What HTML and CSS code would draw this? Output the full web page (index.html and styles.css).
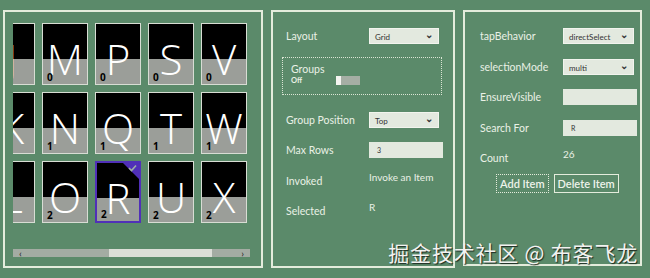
FILE: index.html
```html
<!doctype html>
<html>
    <head>
        <meta charset="utf-8" />
        <title>ListView Grid</title>
        <link rel="stylesheet" href="styles.css">
    </head>
    <body>
        <div class="app">
            <section class="panel grid-panel">
                <div class="viewport">
                    <div class="tiles">
                        <div class="tile"><span class="letter">J</span><span class="num">0</span></div>
                        <div class="tile"><span class="letter">M</span><span class="num">0</span></div>
                        <div class="tile"><span class="letter">P</span><span class="num">0</span></div>
                        <div class="tile"><span class="letter">S</span><span class="num">0</span></div>
                        <div class="tile"><span class="letter">V</span><span class="num">0</span></div>
                        <div class="tile"><span class="letter">K</span><span class="num">1</span></div>
                        <div class="tile"><span class="letter">N</span><span class="num">1</span></div>
                        <div class="tile"><span class="letter">Q</span><span class="num">1</span></div>
                        <div class="tile"><span class="letter">T</span><span class="num">1</span></div>
                        <div class="tile"><span class="letter">W</span><span class="num">1</span></div>
                        <div class="tile"><span class="letter">L</span><span class="num">2</span></div>
                        <div class="tile"><span class="letter">O</span><span class="num">2</span></div>
                        <div class="tile selected">
                            <span class="letter">R</span><span class="num">2</span>
                            <svg class="check" width="16" height="16" viewBox="0 0 16 16">
                                <polygon points="0,0 16,0 16,16" fill="#5030b8" />
                                <polyline points="6,5 8.5,7.5 13,2.5" fill="none" stroke="#9fb0a6" stroke-width="1.6" />
                            </svg>
                        </div>
                        <div class="tile"><span class="letter">U</span><span class="num">2</span></div>
                        <div class="tile"><span class="letter">X</span><span class="num">2</span></div>
                    </div>
                </div>
                <div class="scrollbar">
                    <span class="arrow">‹</span>
                    <div class="track"><div class="thumb"></div></div>
                    <span class="arrow">›</span>
                </div>
            </section>

            <section class="panel settings">
                <div class="row">
                    <label>Layout</label>
                    <div class="select">Grid<span class="chev">⌄</span></div>
                </div>
                <div class="groups">
                    <div class="groups-title">Groups</div>
                    <div class="toggle-row">
                        <span class="off">Off</span>
                        <span class="toggle"><span class="knob"></span></span>
                    </div>
                </div>
                <div class="row">
                    <label>Group Position</label>
                    <div class="select">Top<span class="chev">⌄</span></div>
                </div>
                <div class="row">
                    <label>Max Rows</label>
                    <div class="input">3</div>
                </div>
                <div class="row">
                    <label>Invoked</label>
                    <span class="value">Invoke an Item</span>
                </div>
                <div class="row">
                    <label>Selected</label>
                    <span class="value">R</span>
                </div>
            </section>

            <section class="panel settings right">
                <div class="row">
                    <label>tapBehavior</label>
                    <div class="select">directSelect<span class="chev">⌄</span></div>
                </div>
                <div class="row">
                    <label>selectionMode</label>
                    <div class="select">multi<span class="chev">⌄</span></div>
                </div>
                <div class="row">
                    <label>EnsureVisible</label>
                    <div class="input"></div>
                </div>
                <div class="row">
                    <label>Search For</label>
                    <div class="input">R</div>
                </div>
                <div class="row">
                    <label>Count</label>
                    <span class="value">26</span>
                </div>
                <div class="buttons">
                    <button class="focused">Add Item</button>
                    <button>Delete Item</button>
                </div>
            </section>

            <div class="watermark">掘金技术社区 @ 布客飞龙</div>
        </div>
    </body>
</html>
```

FILE: styles.css
```css
body {
    margin: 0;
    background: #5b8a6a;
    font-family: Lato, "Open Sans", sans-serif;
    color: #eaf1e6;
}
.app {
    position: relative;
    display: flex;
    gap: 8px;
    padding: 10px 0 0 3px;
    width: 650px;
    height: 278px;
    box-sizing: border-box;
}
.panel {
    border: 2px solid #e4ecdc;
    height: 258px;
    box-sizing: border-box;
}
.grid-panel {
    width: 260px;
    padding: 11px 0 0 8px;
}
.viewport {
    width: 237px;
    height: 222px;
    overflow: hidden;
}
.tiles {
    display: grid;
    grid-template-columns: repeat(5, 46px);
    grid-auto-rows: 62px;
    gap: 7px;
    margin-left: -24px;
}
.tile {
    position: relative;
    background: linear-gradient(#000 0, #000 35px, #9b9e99 35px);
    border: 1px solid #d8ddd4;
    box-sizing: border-box;
    overflow: hidden;
}
.letter {
    display: block;
    text-align: center;
    font-family: "Open Sans", sans-serif;
    font-weight: 300;
    font-size: 42px;
    line-height: 54px;
    margin-top: 8px;
    color: #fff;
}
.num {
    position: absolute;
    left: 4px;
    bottom: 2px;
    font-family: "Open Sans", sans-serif;
    font-weight: 700;
    font-size: 10px;
    line-height: 10px;
    color: #000;
}
.tile.selected {
    border: 2px solid #5030b8;
}
.check {
    position: absolute;
    top: 0;
    right: 0;
}
.scrollbar {
    display: flex;
    align-items: center;
    width: 237px;
    height: 8px;
    margin-top: 4px;
    background: #a3aca3;
}
.arrow {
    font-size: 10px;
    line-height: 8px;
    color: #222;
    padding: 0 6px;
}
.track {
    flex: 1;
    height: 8px;
}
.thumb {
    margin-left: 81px;
    width: 103px;
    height: 8px;
    background: #dcdfd8;
}

.settings {
    width: 184px;
    padding: 16px 10px 0 13px;
    font-size: 10.5px;
}
.settings.right {
    width: 179px;
    height: 256px;
    padding-left: 15px;
}
.row {
    display: grid;
    grid-template-columns: 83px auto;
    align-items: center;
    height: 16px;
    margin-bottom: 14.5px;
}
.right .row:nth-child(5) {
    margin-bottom: 8px;
}
.select,
.input {
    height: 16px;
    box-sizing: border-box;
    background: #e3e9df;
    color: #333;
    font-size: 8px;
    line-height: 16px;
    padding: 0 5px;
    width: 70px;
}
.select {
    display: flex;
    justify-content: space-between;
    border: 1px solid #f2f4ee;
}
.right .select {
    width: 71px;
}
.input {
    width: 74px;
    font-size: 7px;
    padding-left: 8px;
}
.chev {
    font-size: 10px;
    line-height: 10px;
    font-weight: 700;
}
.value {
    font-size: 10px;
    align-self: start;
    margin-top: -2px;
}
.groups {
    width: 160px;
    height: 38px;
    margin: -2px 0 17px -4px;
    border: 1px dotted #dbe5d4;
    box-sizing: border-box;
    padding: 5px 0 0 8px;
}
.groups-title {
    font-size: 10.5px;
    line-height: 13px;
}
.toggle-row {
    display: flex;
    align-items: center;
    gap: 34px;
}
.off {
    font-size: 7.5px;
    font-weight: 700;
}
.toggle {
    display: flex;
    width: 24px;
    height: 9px;
    background: #a5aea4;
}
.knob {
    width: 5px;
    height: 9px;
    background: #f4f4f0;
}
.buttons {
    display: flex;
    gap: 5px;
    padding-left: 16px;
}
button {
    font-family: Lato, sans-serif;
    font-size: 11px;
    font-weight: 600;
    color: #eef3ea;
    background: transparent;
    border: 1px solid #e4ecdc;
    height: 19px;
    padding: 0 3px;
    line-height: 15px;
}
button.focused {
    border-style: dotted;
}
.watermark {
    position: absolute;
    right: 12px;
    bottom: 11px;
    font-family: "Noto Sans CJK SC", sans-serif;
    font-size: 21px;
    color: #f2f2f0;
    text-shadow: 1px 1px 1px #1c2a20;
    letter-spacing: 0.8px;
}
```
